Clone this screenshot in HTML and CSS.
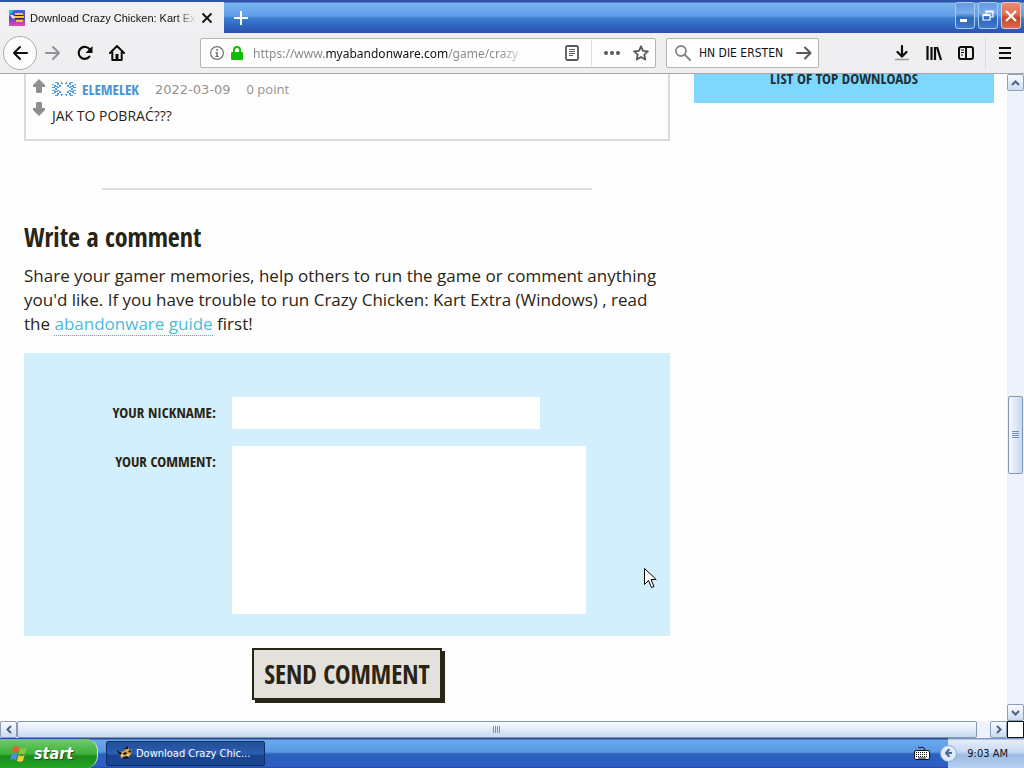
FILE: index.html
```html
<!DOCTYPE html>
<html lang="en">
<head>
<meta charset="utf-8">
<title>Download Crazy Chicken: Kart Extra</title>
<link rel="stylesheet" href="styles.css">
</head>
<body>
<header class="titlebar">
  <div class="tab">
    <svg class="favicon" viewBox="0 0 16 16" width="16" height="16"><defs><linearGradient id="fav" x2="0" y2="1"><stop offset="0" stop-color="#3d62d8"/><stop offset=".55" stop-color="#6a45bd"/><stop offset="1" stop-color="#f044b0"/></linearGradient></defs><path fill="url(#fav)" d="M0 0h16v16H0z"/><path fill="#19c6dd" d="M0 0h5L0 6z"/><path fill="#f5c33c" d="M6 3h8v2H6zM5 6h10v2H5zM7 10h7v2H7z"/><path fill="#271c52" d="M6 5h8v1H6zM6 8h9v1H6z"/><path fill="#e9dff5" d="M1 5h3l2 3-2 1z"/></svg>
    <span class="tab-title">Download Crazy Chicken: Kart Ext</span>
    <button class="tab-close" aria-label="Close tab"><svg width="12" height="12" viewBox="0 0 12 12"><path d="M1.500 1.500l9 9M10.500 1.500l-9 9" stroke="#111" stroke-width="1.800"/></svg></button>
  </div>
  <button class="new-tab" aria-label="New tab"><svg width="14" height="14" viewBox="0 0 14 14"><path d="M7 0v14M0 7h14" stroke="#fff" stroke-width="2"/></svg></button>
  <div class="window-buttons">
    <button class="win" aria-label="Minimize"><svg width="18" height="24" viewBox="0 0 18 24"><path fill="#fff" d="M4 15h7v3H4z"/></svg></button>
    <button class="win" aria-label="Restore"><svg width="18" height="24" viewBox="0 0 18 24"><path d="M7 10V7h7v6h-3M7 8h7M4 10.500h7V16H4zM4 11.500h7" fill="none" stroke="#fff" stroke-width="1.200"/></svg></button>
    <button class="win win-close" aria-label="Close"><svg width="18" height="24" viewBox="0 0 18 24"><path d="M4 7l10 10M14 7L4 17" stroke="#fff" stroke-width="2.200"/></svg></button>
  </div>
</header>

<nav class="toolbar">
  <div class="nav-buttons">
    <button class="icon-btn back" aria-label="Back"><svg width="16" height="16" viewBox="0 0 16 16"><path d="M15 8H2M8 2L2 8l6 6" fill="none" stroke="#0c0c0d" stroke-width="2" stroke-linecap="round" stroke-linejoin="round"/></svg></button>
    <button class="icon-btn" aria-label="Forward"><svg width="16" height="16" viewBox="0 0 16 16"><path d="M1 8h13M8 2l6 6-6 6" fill="none" stroke="#929294" stroke-width="2" stroke-linecap="round" stroke-linejoin="round"/></svg></button>
    <button class="icon-btn" aria-label="Reload"><svg width="16" height="16" viewBox="0 0 16 16"><path d="M12.400 11.600A6 6 0 1 1 13 5" fill="none" stroke="#0c0c0d" stroke-width="2.200" stroke-linecap="round"/><path d="M15.500 1v7H8.500z" fill="#0c0c0d"/></svg></button>
    <button class="icon-btn" aria-label="Home"><svg width="16" height="16" viewBox="0 0 16 16"><path d="M1 8l7-7 7 7M3.300 7v8h9.400V7" fill="none" stroke="#0c0c0d" stroke-width="2" stroke-linecap="round" stroke-linejoin="round"/><path fill="#0c0c0d" d="M6.500 9h3v6h-3z"/></svg></button>
  </div>
  <div class="field url-field">
    <svg width="16" height="16" viewBox="0 0 16 16"><circle cx="8" cy="8" r="6.400" fill="none" stroke="#717174" stroke-width="1.200"/><path d="M7.200 4h1.700v1.700H7.200zM6.400 7h2.400v4h1v1H6.300v-1h1V8h-.9z" fill="#717174"/></svg>
    <svg width="14" height="16" viewBox="0 0 14 16"><path d="M4 8V5a3 3 0 0 1 6 0v3" fill="none" stroke="#12bc00" stroke-width="2"/><rect x="1" y="7" width="12" height="8" rx="1" fill="#12bc00"/></svg>
    <div class="url" role="textbox" aria-label="Address" contenteditable="true" spellcheck="false">https://www.<b>myabandonware.com</b>/game/crazy</div>
    <button class="icon-btn small reader" aria-label="Reader view"><svg width="16" height="16" viewBox="0 0 16 16"><rect x="2" y="1" width="12" height="14" rx="1.500" fill="none" stroke="#58585a" stroke-width="1.800"/><path d="M5 4.500h6M5 6.500h6M5 8.500h6M5 10.500h4" stroke="#58585a"/></svg></button>
    <i class="sep"></i>
    <button class="icon-btn small dots" aria-label="Page actions"><svg width="18" height="16" viewBox="0 0 18 16"><g fill="#58585a"><circle cx="3" cy="8" r="2"/><circle cx="9" cy="8" r="2"/><circle cx="15" cy="8" r="2"/></g></svg></button>
    <button class="icon-btn small" aria-label="Bookmark"><svg width="16" height="16" viewBox="0 0 16 16"><path d="M8 1.300l2 4.500 4.900.5-3.600 3.300 1 4.900L8 12l-4.300 2.500 1-4.900L1.100 6.300 6 5.800z" fill="none" stroke="#58585a" stroke-width="1.800" stroke-linejoin="round"/></svg></button>
  </div>
  <div class="field search-field">
    <svg width="18" height="18" viewBox="0 0 18 18"><circle cx="7" cy="7" r="5" fill="none" stroke="#858588" stroke-width="1.800"/><path d="M10.600 10.600L16 16" stroke="#858588" stroke-width="2" stroke-linecap="round"/></svg>
    <input class="search" type="text" aria-label="Search" value="HN DIE ERSTEN">
    <button class="icon-btn small" aria-label="Go"><svg width="16" height="16" viewBox="0 0 16 16"><path d="M1 8h13M9 2.500L14.500 8 9 13.500" fill="none" stroke="#58585a" stroke-width="2" stroke-linecap="round" stroke-linejoin="round"/></svg></button>
  </div>
  <div class="tools">
    <button class="icon-btn" aria-label="Downloads"><svg width="16" height="16" viewBox="0 0 16 16"><path d="M8 1v10M3.500 7L8 11.500 12.500 7" fill="none" stroke="#0c0c0d" stroke-width="2.200" stroke-linecap="round" stroke-linejoin="round"/><path d="M1 14.500h14" stroke="#9b9b9d" stroke-width="1.500"/></svg></button>
    <button class="icon-btn" aria-label="Library"><svg width="16" height="16" viewBox="0 0 16 16"><path d="M1.500 1v14M5.500 2v13M9 2v13M11 2l4 13" fill="none" stroke="#0c0c0d" stroke-width="2.200"/></svg></button>
    <button class="icon-btn" aria-label="Sidebars"><svg width="16" height="16" viewBox="0 0 16 16"><rect x="1" y="2" width="14" height="12" rx="2" fill="none" stroke="#0c0c0d" stroke-width="2"/><path d="M8 2v12" stroke="#0c0c0d" stroke-width="2"/><path d="M3 5h3M3 7.500h3M3 10h2" stroke="#0c0c0d"/></svg></button>
    <i class="sep tall"></i>
    <button class="icon-btn" aria-label="Menu"><svg width="16" height="16" viewBox="0 0 16 16"><path d="M2 3h12M2 8h12M2 13h12" stroke="#0c0c0d" stroke-width="2"/></svg></button>
  </div>
</nav>

<div class="viewport">
  <div class="page">
    <main>
      <article class="comment">
        <div class="votes">
          <button class="vote" aria-label="Vote up"><svg width="12" height="14" viewBox="0 0 12 14"><path fill="#8f8f8f" d="M6 0l6 6v2H9v5l-1 1H4l-1-1V8H0V6z"/></svg></button>
          <button class="vote" aria-label="Vote down"><svg width="12" height="14" viewBox="0 0 12 14"><path fill="#8f8f8f" d="M6 14l6-6V6H9V1L8 0H4L3 1v5H0v2z"/></svg></button>
        </div>
        <div class="comment-body">
          <div class="meta">
            <svg width="24" height="16" viewBox="0 0 24 16" fill="#4b9bd8"><g id="q"><path d="M0 3h2v1H0zM2 4h2v2H2zM3 1h3v1H3zM5 2h2v2H5zM7 4h2v2H7zM9 2h2v1H9zM4 5h2v1H4zM0 6h3v1H0zM5 6h2v1H5zM3 7h2v1H3zM9 1h1v1H9z"/></g><use href="#q" transform="matrix(-1 0 0 1 24 0)"/><use href="#q" transform="matrix(1 0 0 -1 0 16)"/><use href="#q" transform="matrix(-1 0 0 -1 24 16)"/></svg>
            <strong class="author">ELEMELEK</strong>
            <time class="date">2022-03-09</time>
            <span class="points">0 point</span>
          </div>
          <p class="comment-text">JAK TO POBRAĆ???</p>
        </div>
      </article>
      <hr class="rule">
      <h2 class="heading">Write a comment</h2>
      <p class="intro">Share your gamer memories, help others to run the game or comment anything<br>you'd like. If you have trouble to run Crazy Chicken: Kart Extra (Windows) , read<br>the <a class="guide" href="#">abandonware guide</a> first!</p>
      <form class="form">
        <div class="fields">
          <label class="label" for="nick">YOUR NICKNAME:</label>
          <input class="box nick" id="nick" type="text">
          <label class="label" for="text">YOUR COMMENT:</label>
          <textarea class="box text" id="text"></textarea>
        </div>
        <button class="send" type="button">SEND COMMENT</button>
      </form>
    </main>
    <aside><a class="top-downloads" href="#">LIST OF TOP DOWNLOADS</a></aside>
  </div>
  <div class="scroll vertical">
    <button class="arrow" aria-label="Scroll up"><svg width="9" height="6" viewBox="0 0 9 6"><path d="M1 5l3.500-3.500L8 5" fill="none" stroke="#4d6185" stroke-width="2"/></svg></button>
    <div class="track"><div class="thumb"><i class="grip"></i></div></div>
    <button class="arrow" aria-label="Scroll down"><svg width="9" height="6" viewBox="0 0 9 6"><path d="M1 1l3.500 3.500L8 1" fill="none" stroke="#4d6185" stroke-width="2"/></svg></button>
  </div>
  <div class="scroll horizontal">
    <button class="arrow" aria-label="Scroll left"><svg width="6" height="9" viewBox="0 0 6 9"><path d="M5 1L1.500 4.500 5 8" fill="none" stroke="#4d6185" stroke-width="2"/></svg></button>
    <div class="track"><div class="thumb"><i class="grip"></i></div></div>
    <button class="arrow" aria-label="Scroll right"><svg width="6" height="9" viewBox="0 0 6 9"><path d="M1 1l3.500 3.500L1 8" fill="none" stroke="#4d6185" stroke-width="2"/></svg></button>
  </div>
  <div class="corner"></div>
</div>

<footer class="taskbar">
  <button class="start"><svg width="18" height="18" viewBox="0 0 18 18"><path fill="#e8602c" d="M3 2c2-1.500 4-1.500 6 0L8 8C6 6.500 4 6.500 2 8z"/><path fill="#8cc63e" d="M10 2.500c2 1.500 4 1.500 7 0l-2 6c-2 1-4 1-6 0z"/><path fill="#4a8ce8" d="M1.500 9.500c2-1.500 4-1.500 6 0L6 15c-2-1-4-1-6 0z"/><path fill="#f9cb37" d="M8.500 10c2 1.500 4 1.500 6 0L13 16c-2 1-4 1-6 0z"/></svg><span>start</span></button>
  <button class="task"><svg width="16" height="16" viewBox="0 0 16 16"><path fill="#d6a24c" d="M1 6l4 1 3-2 3-3 1 3 3-1-1 5-3 4-3-1-4 1-1-4z"/><path fill="#141414" d="M0 5l5 3-1 2-3-2zM7 4l4-3v3zM6 8l3-1 1 2-3 1zM11 6l4-1-2 3zM6 12l4-1 2 2-5 1z"/><path fill="#f4ecd8" d="M9 10l3-1-1 2zM4 9l2 1-1 2z"/></svg><span>Download Crazy Chic...</span></button>
  <svg class="keyboard" width="16" height="14" viewBox="0 0 16 14"><path d="M4 1l2 1 2-1 2 1 1 2" fill="none" stroke="#111"/><rect x=".5" y="4.500" width="15" height="9" rx="1.500" fill="#fff" stroke="#111"/><path d="M2 6.500h12M2 8.500h12M2 10.500h12" stroke="#111" stroke-dasharray="1 1"/><path d="M4 12h8" stroke="#111"/></svg>
  <div class="tray">
    <button class="tray-toggle" aria-label="Show hidden icons"><svg width="8" height="8" viewBox="0 0 8 8"><path d="M4.500 0L1 4l3.500 4M1 4h6" fill="none" stroke="#436a9b" stroke-width="2"/></svg></button>
    <time class="clock">9:03 AM</time>
  </div>
</footer>

<svg class="cursor" width="13" height="22" viewBox="0 0 13 22"><path d="M.5.500v16l4-4 3 7 2.500-1-3-7h5.200z" fill="#fff" stroke="#000"/></svg>
</body>
</html>
```
FILE: styles.css
```css
* { box-sizing: border-box; }
body {
  margin: 0;
  height: 100vh;
  overflow: hidden;
  display: flex;
  flex-direction: column;
  background: #fefefe;
  color: #2a2415;
  font-family: "Open Sans", "Noto Sans", sans-serif;
}
button { padding: 0; border: 0; background: none; font: inherit; color: inherit; }
svg { display: block; flex: none; }

.titlebar {
  flex: none;
  height: 33px;
  padding-top: 2px;
  display: flex;
  background: linear-gradient(#2f55a8 0 2px, #78b5f0 3px, #629ee8 16px, #3d80d2 18px, #2c5fba 28px, #2d51ad);
}
.tab {
  width: 224px;
  padding: 0 11px 0 9px;
  display: flex;
  align-items: center;
  gap: 5px;
  background: #f0eff1;
}
.tab-title {
  flex: 1;
  overflow: hidden;
  white-space: nowrap;
  font: 11px "Liberation Sans", Arial, sans-serif;
  color: #111;
  -webkit-mask-image: linear-gradient(90deg, #000 88%, transparent);
  mask-image: linear-gradient(90deg, #000 88%, transparent);
}
.new-tab { padding: 0 10px; }
.window-buttons { margin-left: auto; padding-right: 3px; display: flex; gap: 3px; align-items: flex-start; }
.win {
  width: 20px;
  height: 27px;
  border: 1px solid #a8cdf5;
  border-radius: 3px;
  background: linear-gradient(#6699e2, #7badea 40%, #2d68be 60%, #3f79cb);
}
.win-close { border-color: #efc5bd; background: linear-gradient(#e78d75, #df7055 45%, #c74426 60%, #dc6b50); }

.toolbar {
  flex: none;
  height: 41px;
  padding: 0 3px;
  display: flex;
  align-items: center;
  background: #efeef0;
  border-bottom: 1px solid #a5a5a8;
}
.nav-buttons { display: flex; align-items: center; }
.icon-btn { width: 32px; height: 32px; display: grid; place-items: center; }
.back { width: 34px; height: 34px; border: 1px solid #acacae; border-radius: 50%; background: #fdfdfd; }
.field {
  height: 30px;
  display: flex;
  align-items: center;
  background: #fefefe;
  border: 1px solid #b4b4b7;
  border-radius: 2px;
}
.url-field { width: 456px; margin-left: 67px; padding: 0 2px 0 8px; gap: 5px; }
.url {
  flex: 1;
  min-width: 0;
  margin-left: 4px;
  overflow: hidden;
  white-space: nowrap;
  font: 12px "Noto Sans", "Open Sans", sans-serif;
  color: #8b8b8e;
  -webkit-mask-image: linear-gradient(90deg, #000 88%, transparent);
  mask-image: linear-gradient(90deg, #000 88%, transparent);
}
.url b { font-weight: 400; color: #111; }
.small { width: 24px; height: 28px; }
.reader { margin-left: 23px; }
.dots { margin-left: 3px; }
.sep { width: 1px; height: 26px; margin-left: 2px; background: #dcdcde; }
.tall { height: 32px; margin: 0 3px; }
.search-field { width: 153px; margin-left: 10px; padding: 0 2px 0 7px; }
.search {
  flex: 1;
  min-width: 0;
  padding: 0 0 0 7px;
  border: 0;
  outline: 0;
  background: none;
  color: #111;
  font: 12px "DejaVu Sans Condensed", "DejaVu Sans", sans-serif;
}
.tools { margin-left: auto; display: flex; align-items: center; }

.viewport {
  flex: 1;
  min-height: 0;
  display: grid;
  grid-template-columns: minmax(0, 1fr) 17px;
  grid-template-rows: minmax(0, 1fr) 17px;
}
.page {
  overflow: hidden;
  padding: 0 13px 0 24px;
  display: grid;
  grid-template-columns: minmax(0, 1fr) 300px;
  gap: 24px;
  align-items: start;
}
.comment {
  padding: 5px 7px 12px;
  display: flex;
  gap: 7px;
  border: 2px solid #dbdad5;
  border-top: 0;
}
.votes { display: flex; flex-direction: column; gap: 9px; }
.vote { display: block; }
.meta { display: flex; align-items: center; height: 20px; font-size: 13px; color: #93928f; }
.author { margin-left: 6px; font: bold 15px/18px "Open Sans Condensed", sans-serif; color: #4a94db; }
.date { margin-left: 16px; font-family: "DejaVu Sans", sans-serif; }
.points { margin-left: 16px; }
.comment-text { margin: 6px 0 0; font-size: 14px; line-height: 22px; }
.rule { margin: 47px 12% 0; border: 0; border-top: 2px solid #dfdedb; }
.heading { margin: 30px 0 0; font: bold 26px/34px "Open Sans Condensed", sans-serif; }
.intro { margin: 10px 0 0; font-size: 17px; line-height: 24px; white-space: nowrap; }
.guide { color: #4cbbdc; text-decoration: none; border-bottom: 1px dotted #4cbbdc; }
.form { margin-top: 17px; display: flex; flex-direction: column; align-items: center; gap: 12px; }
.fields {
  width: 100%;
  padding: 44px 84px 22px 0;
  display: grid;
  grid-template-columns: 192px minmax(0, 1fr);
  gap: 17px 16px;
  background: #d2effb;
}
.label {
  text-align: right;
  font: bold 15px/30px "Open Sans Condensed", sans-serif;
}
.box { display: block; border: 0; background: #fff; resize: none; outline: 0; font: inherit; }
.nick { width: 308px; height: 32px; }
.text { width: 100%; height: 168px; }
.send {
  padding: 0 10px;
  border: 2px solid #2a2415;
  background: #e3e1db;
  box-shadow: 3px 3px 0 #2a2415;
  font: 26px/48px "Open Sans Condensed", sans-serif;
}
.top-downloads {
  height: 29px;
  display: block;
  background: #7ed7fd;
  color: #1f3038;
  text-align: center;
  text-decoration: none;
  font: bold 15px/9px "Open Sans Condensed", sans-serif;
}

.scroll { display: flex; background: #eef3fb; }
.vertical { flex-direction: column; }
.arrow {
  flex: none;
  width: 17px;
  height: 17px;
  display: grid;
  place-items: center;
  border: 1px solid #8d9db8;
  border-radius: 2px;
  background: linear-gradient(#f8fbff, #cddcf0);
}
.track { flex: 1; display: flex; }
.vertical .track { flex-direction: column; padding-top: 305px; }
.thumb { display: grid; place-items: center; border: 1px solid #8295b3; border-radius: 2px; }
.vertical .thumb { height: 78px; margin: 0 1px; background: linear-gradient(90deg, #f5faff, #c5d8f2); }
.horizontal .thumb { flex: 1; margin-right: 13px; background: linear-gradient(#f8fbff, #c8daf1); }
.vertical .grip { width: 7px; height: 8px; background: repeating-linear-gradient(#7f8fae 0 1px, transparent 1px 2px); }
.horizontal .grip { width: 8px; height: 7px; background: repeating-linear-gradient(90deg, #7f8fae 0 1px, transparent 1px 2px); }
.corner { border: 1px solid #111; background: #fff; }

.taskbar {
  flex: none;
  height: 30px;
  display: flex;
  align-items: center;
  background: linear-gradient(#2a4c91 0 1px, #6aa9ee 2px, #5a98e3 14px, #2b61bd 16px, #2f5fc4 28px, #2449a0);
}
.start {
  width: 98px;
  height: 29px;
  align-self: flex-end;
  padding-left: 10px;
  display: flex;
  align-items: center;
  gap: 6px;
  border-radius: 0 12px 12px 0;
  border-right: 1px solid #cfe9cf;
  background: linear-gradient(#72c96d, #3fb13c 50%, #1a8d1c 60%, #22a524);
  color: #fff;
  font: italic bold 16px "DejaVu Sans Condensed", "DejaVu Sans", sans-serif;
  text-shadow: 1px 1px 1px #14541a;
}
.task {
  width: 159px;
  height: 25px;
  margin-left: 8px;
  padding-left: 10px;
  display: flex;
  align-items: center;
  gap: 3px;
  border: 1px solid #0e2d68;
  border-radius: 2px;
  background: linear-gradient(#234f98, #2a5eae 50%, #17428c 60%, #1a4796);
  color: #fff;
  font: 11px "DejaVu Sans Condensed", "DejaVu Sans", sans-serif;
  white-space: nowrap;
}
.keyboard { margin-left: auto; }
.tray {
  align-self: stretch;
  margin-left: 18px;
  padding-right: 16px;
  display: flex;
  align-items: center;
  gap: 10px;
  background: linear-gradient(#7e9ac8 0 1px, #e4edf9 2px, #c7d9f2 14px, #9bbbe6 17px, #b8d0f0);
}
.tray-toggle {
  width: 17px;
  height: 17px;
  margin-left: -8px;
  display: grid;
  place-items: center;
  border: 1px solid #87a8d2;
  border-radius: 50%;
  background: #dfebf8;
}
.clock { font: 11px "DejaVu Sans Condensed", "DejaVu Sans", sans-serif; color: #111; }
.cursor { position: absolute; left: 644px; top: 568px; }
```
